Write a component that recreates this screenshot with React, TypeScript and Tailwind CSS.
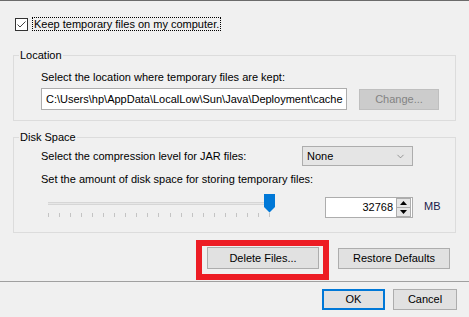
import { ChevronDown } from 'lucide-react';

const ticks = Array.from({ length: 21 }, (_, i) => i);

const GroupBox = ({ title, children, className }: { title: string; children: React.ReactNode; className?: string }) => (
  <div className={`relative mx-[13px] border border-[#dcdcdc] ${className ?? ''}`}>
    <span className="absolute left-[5px] -top-[8px] bg-[#f0f0f0] px-px leading-[15px]">{title}</span>
    {children}
  </div>
);

const Btn = ({ children, className }: { children: React.ReactNode; className?: string }) => (
  <button className={`flex items-center justify-center bg-[#e1e1e1] border border-[#adadad] text-black leading-none ${className ?? ''}`}>
    {children}
  </button>
);

const App = () => {
  return (
    <div
      className="w-[469px] h-[317px] flex flex-col bg-[#f0f0f0] border-t border-[#6b6b6b] text-[11px] text-black overflow-hidden"
      style={{ fontFamily: '"Liberation Sans", Arial, sans-serif' }}
    >
      {/* Checkbox */}
      <div className="mt-[16px] ml-[15px] flex items-center h-[14px]">
        <div className="w-[13px] h-[13px] border border-[#333333] bg-white flex items-center justify-center">
          <svg width="11" height="11" viewBox="0 0 11 11">
            <path d="M1.5 5.5 L4 8 L9.5 2.5" fill="none" stroke="#404040" strokeWidth="1" />
          </svg>
        </div>
        <span className="ml-[4px] px-px leading-[12px] border border-dotted border-black">Keep temporary files on my computer.</span>
      </div>

      {/* Location */}
      <GroupBox title="Location" className="mt-[24px] h-[66px]">
        <div className="pl-[27px] pt-[14px]">
          <div className="leading-[15px]">Select the location where temporary files are kept:</div>
          <div className="mt-[3px] flex items-center">
            <div className="w-[306px] h-[22px] bg-white border border-[#adadad] flex items-center pl-[4px] whitespace-nowrap overflow-hidden">
              C:\Users\hp\AppData\LocalLow\Sun\Java\Deployment\cache
            </div>
            <Btn className="ml-[12px] w-[80px] h-[21px] !bg-[#cccccc] !border-[#bfbfbf] !text-[#838383]">Change...</Btn>
          </div>
        </div>
      </GroupBox>

      {/* Disk Space */}
      <GroupBox title="Disk Space" className="mt-[16px] h-[96px]">
        <div className="pl-[27px] pt-[8px]">
          <div className="flex items-center h-[20px]">
            <div className="w-[261px]">Select the compression level for JAR files:</div>
            <div className="w-[111px] h-[20px] bg-[#e5e5e5] border border-[#adadad] flex items-center justify-between pl-[4px] pr-[6px]">
              <span>None</span>
              <ChevronDown size={11} strokeWidth={1.2} color="#555" />
            </div>
          </div>
          <div className="mt-[6px] leading-[15px]">Set the amount of disk space for storing temporary files:</div>
          <div className="mt-[7px] flex items-start">
            <div className="ml-[7px] relative w-[227px] h-[24px]">
              <div className="mt-[8px] h-[3px] w-[227px] border-y border-[#d6d6d6] bg-[#e7e7e7]" />
              <div className="mt-[8px] flex justify-between w-[222px]">
                {ticks.map((t) => (
                  <div key={t} className="w-px h-[4px] bg-[#c4c4c4]" />
                ))}
              </div>
              <svg className="absolute left-[216px] top-0" width="11" height="19" viewBox="0 0 11 19">
                <path d="M0 0 H11 V13 L5.5 18.5 L0 13 Z" fill="#0078d7" />
              </svg>
            </div>
            <div className="ml-[50px] mt-[3px] w-[88px] h-[21px] bg-white border border-[#adadad] flex items-center">
              <span className="flex-1 text-right pr-[3px]">32768</span>
              <div className="w-[16px] h-[19px] flex flex-col pr-px">
                <div className="flex-1 border border-[#adadad] bg-[#e5e5e5] flex items-center justify-center">
                  <svg width="7" height="4" viewBox="0 0 7 4"><path d="M0 4 L3.5 0 L7 4 Z" fill="#000" /></svg>
                </div>
                <div className="flex-1 border border-t-0 border-[#adadad] bg-[#e5e5e5] flex items-center justify-center">
                  <svg width="7" height="4" viewBox="0 0 7 4"><path d="M0 0 L3.5 4 L7 0 Z" fill="#000" /></svg>
                </div>
              </div>
            </div>
            <span className="ml-[11px] mt-[4px] text-[#1a1a4a]">MB</span>
          </div>
        </div>
      </GroupBox>

      {/* Delete / Restore */}
      <div className="mt-[7px] flex justify-end items-start pr-[19px] gap-[9px]">
        <div className="w-[133px] h-[40px] border-[6px] border-[#ed1c24] pl-[5px] pt-[1px]">
          <Btn className="w-[112px] h-[22px]">Delete Files...</Btn>
        </div>
        <Btn className="mt-[8px] w-[112px] h-[21px]">Restore Defaults</Btn>
      </div>

      <div className="mt-px h-px bg-[#a0a0a0]" />

      {/* OK / Cancel */}
      <div className="mt-[7px] flex justify-end pr-[12px] gap-[8px]">
        <Btn className="w-[63px] h-[21px] !border-2 !border-[#0078d7]">OK</Btn>
        <Btn className="w-[64px] h-[21px]">Cancel</Btn>
      </div>
    </div>
  );
};

export default App;
